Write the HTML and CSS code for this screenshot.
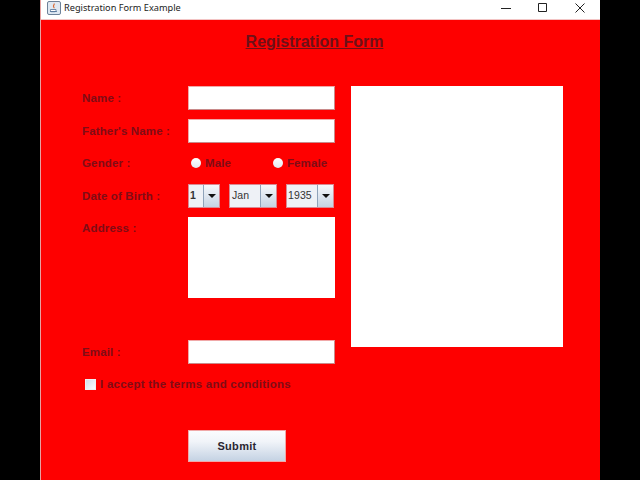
FILE: index.html
```html
<!DOCTYPE html>
<html lang="en">

<head>
    <meta charset="UTF-8">
    <title>Registration Form Example</title>
    <link rel="stylesheet" href="styles.css">
</head>

<body>
    <div class="window">
        <!-- Title bar -->
        <header class="title-bar">
            <svg class="app-icon" width="14" height="14" viewBox="0 0 14 14">
                <rect x="0.5" y="0.5" width="13" height="13" rx="1.5" fill="#dfe8f2" stroke="#6d8299"/>
                <path d="M3 10.5h7M3.5 8.5h5.5v1.2c0 .6-.5 1-1 1H4.5c-.5 0-1-.4-1-1z" fill="#fff" stroke="#4f7096" stroke-width="0.8"/>
                <path d="M7 2.5c1 1.2-1.3 2 -.4 3.2.4.5.6.9.3 1.5" fill="none" stroke="#d8622a" stroke-width="1.1"/>
            </svg>
            <span class="window-title">Registration Form Example</span>
            <div class="window-buttons">
                <svg width="10" height="10" viewBox="0 0 10 10"><path d="M0 5.5h10" stroke="#222"/></svg>
                <svg width="10" height="10" viewBox="0 0 10 10"><path d="M.5.5h8v8h-8z" fill="none" stroke="#222"/></svg>
                <svg width="10" height="10" viewBox="0 0 10 10"><path d="M.5.5l9 9M9.5.5l-9 9" stroke="#222"/></svg>
            </div>
        </header>

        <!-- Form -->
        <main class="content">
            <h1 class="form-title">Registration Form</h1>

            <div class="columns">
                <form class="form">
                    <div class="row row-input">
                        <label class="label">Name :</label>
                        <div class="text-field"></div>
                    </div>
                    <div class="row row-input">
                        <label class="label">Father's Name :</label>
                        <div class="text-field"></div>
                    </div>
                    <div class="row row-gender">
                        <label class="label">Gender :</label>
                        <div class="radios">
                            <span class="radio-item radio-male"><i class="radio"></i>Male</span>
                            <span class="radio-item"><i class="radio"></i>Female</span>
                        </div>
                    </div>
                    <div class="row row-input">
                        <label class="label">Date of Birth :</label>
                        <div class="combos">
                            <div class="combo combo-day"><span class="combo-value">1</span><span class="combo-arrow"></span></div>
                            <div class="combo combo-month"><span class="combo-value">Jan</span><span class="combo-arrow"></span></div>
                            <div class="combo combo-year"><span class="combo-value">1935</span><span class="combo-arrow"></span></div>
                        </div>
                    </div>
                    <div class="row row-address">
                        <label class="label label-top">Address :</label>
                        <div class="text-area"></div>
                    </div>
                    <div class="row row-input">
                        <label class="label">Email :</label>
                        <div class="text-field"></div>
                    </div>
                    <div class="terms">
                        <i class="checkbox"></i>
                        <span>I accept the terms and conditions</span>
                    </div>
                    <button type="button" class="btn-submit">Submit</button>
                </form>

                <div class="output"></div>
            </div>
        </main>
    </div>
</body>

</html>
```

FILE: styles.css
```css
* {
    margin: 0;
    padding: 0;
    box-sizing: border-box;
    font-family: 'Liberation Sans', Arial, sans-serif;
}

:root {
    --form-red: #fe0000;
    --label-dark: #800c16;
}

html,
body {
    width: 640px;
    height: 480px;
    overflow: hidden;
    background-color: #000;
}

.window {
    width: 560px;
    height: 480px;
    margin-left: 40px;
    display: flex;
    flex-direction: column;
    background-color: var(--form-red);
    border-left: 1px solid #e8a0a0;
}

/* Title bar */
.title-bar {
    height: 20px;
    flex: none;
    display: flex;
    align-items: center;
    padding: 0 0 4px 6px;
    background-color: #fff;
    border-bottom: 1px solid #f3c4c4;
}

.app-icon {
    margin-right: 3px;
}

.window-title {
    font-family: 'Noto Sans', 'Open Sans', sans-serif;
    font-size: 9.2px;
    color: #222;
}

.window-buttons {
    margin-left: auto;
    display: flex;
    gap: 27px;
    padding-right: 15px;
}

/* Content */
.content {
    flex: 1;
    padding-left: 42px;
}

.form-title {
    width: 463px;
    margin-top: 13px;
    height: 53px;
    text-align: center;
    font-size: 16px;
    line-height: 18px;
    font-weight: bold;
    color: #6e1018;
    text-decoration: underline;
}

.columns {
    display: flex;
    gap: 16px;
}

.form {
    width: 252px;
    display: flex;
    flex-direction: column;
}

.row {
    display: flex;
    align-items: center;
}

.row-input {
    height: 24px;
    margin-bottom: 9px;
}

.row-gender {
    height: 22px;
    margin-bottom: 10px;
}

.row-address {
    height: 82px;
    margin-bottom: 41px;
    align-items: flex-start;
}

.label {
    width: 106px;
    margin-left: -1px;
    flex: none;
    font-size: 11.5px;
    font-weight: bold;
    letter-spacing: 0.15px;
    color: var(--label-dark);
}

.label-top {
    padding-top: 5px;
}

.text-field {
    width: 147px;
    height: 24px;
    background-color: #fff;
    border: 1px solid #f0a8a8;
    border-right-color: #c98a8a;
    border-bottom-color: #c98a8a;
}

.text-area {
    width: 147px;
    height: 81px;
    background-color: #fff;
}

/* Radios */
.radios {
    display: flex;
    padding-left: 3px;
}

.radio-item {
    display: flex;
    align-items: center;
    gap: 4px;
    font-size: 11.5px;
    font-weight: bold;
    letter-spacing: 0.1px;
    color: var(--label-dark);
}

.radio-male {
    width: 82px;
}

.radio {
    width: 10px;
    height: 10px;
    border-radius: 50%;
    background: linear-gradient(#fff, #e4e8f0);
}

/* Combos */
.combos {
    width: 146px;
    display: flex;
    justify-content: space-between;
}

.combo {
    height: 24px;
    display: flex;
    background-color: #eef1f6;
    border: 1px solid #d98a94;
}

.combo-day {
    width: 32px;
}

.combo-month,
.combo-year {
    width: 48px;
}

.combo-value {
    flex: 1;
    padding-left: 1px;
    font-size: 10.5px;
    font-weight: bold;
    line-height: 21px;
    color: #333;
}

.combo-month .combo-value,
.combo-year .combo-value {
    font-weight: normal;
    letter-spacing: 0.1px;
}

.combo-month .combo-value {
    padding-left: 2px;
}

.combo-arrow {
    width: 16px;
    flex: none;
    display: flex;
    align-items: center;
    justify-content: center;
    background: linear-gradient(#f6f8fb, #c5d3e3);
    border-left: 1px solid #8fa3ba;
}

.combo-arrow::after {
    content: '';
    border-top: 4px solid #111;
    border-left: 4px solid transparent;
    border-right: 4px solid transparent;
}

/* Terms */
.terms {
    height: 22px;
    display: flex;
    align-items: center;
    gap: 4px;
    padding-left: 2px;
    font-size: 11.5px;
    font-weight: bold;
    letter-spacing: 0.25px;
    color: var(--label-dark);
}

.checkbox {
    width: 11px;
    height: 11px;
    background: linear-gradient(135deg, #d3deeb, #fdfdff);
    border: 1px solid #eef0f4;
}

.btn-submit {
    width: 98px;
    height: 32px;
    margin-top: 35px;
    margin-left: 105px;
    border: 1px solid #f0a8a8;
    background: linear-gradient(#fbfcfe, #f1f4f9 35%, #c4d2e3);
    font-size: 11px;
    font-weight: bold;
    letter-spacing: 0.3px;
    color: #2a2530;
}

.output {
    width: 212px;
    height: 261px;
    flex: none;
    background-color: #fff;
}
```
